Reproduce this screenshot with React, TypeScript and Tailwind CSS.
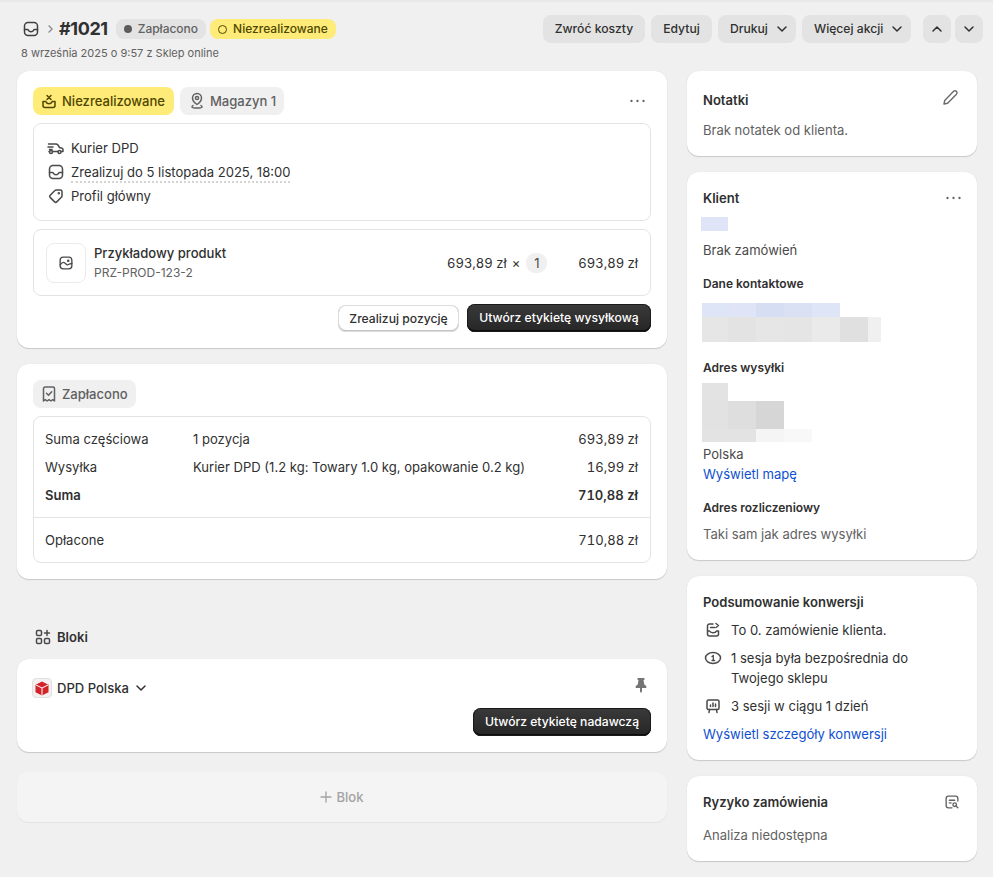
import type { ReactNode } from 'react'

const Ico = ({ children, size = 20, className = '' }: { children: ReactNode; size?: number; className?: string }) => (
  <svg
    width={size}
    height={size}
    viewBox="0 0 20 20"
    fill="none"
    stroke="currentColor"
    strokeWidth={1.5}
    strokeLinecap="round"
    strokeLinejoin="round"
    className={`shrink-0 ${className}`}
  >
    {children}
  </svg>
)

const OrderIcon = ({ size = 20, className = '' }: { size?: number; className?: string }) => (
  <Ico size={size} className={className}>
    <rect x="3.5" y="3.5" width="13" height="13" rx="3.5" />
    <path d="M3.5 10.5h2.8c.5 0 .9.3 1.1.7.4.9 1.4 1.5 2.6 1.5s2.2-.6 2.6-1.5c.2-.4.6-.7 1.1-.7h2.8" />
  </Ico>
)

const Chevron = ({ up = false, className = '' }: { up?: boolean; className?: string }) => (
  <Ico size={20} className={className}>
    <path d={up ? 'M6 12l4-4 4 4' : 'M6 8l4 4 4-4'} />
  </Ico>
)

const Dots = () => (
  <svg width="15" height="4" viewBox="0 0 15 4" fill="#616161" className="shrink-0">
    <circle cx="1.500" cy="2" r="1.150" />
    <circle cx="7.500" cy="2" r="1.150" />
    <circle cx="13.500" cy="2" r="1.150" />
  </svg>
)

const Card = ({ children, className = '' }: { children?: ReactNode; className?: string }) => (
  <section
    className={`rounded-xl bg-white shadow-[0_1px_1px_rgba(0,0,0,0.16),0_0_1px_rgba(0,0,0,0.1)] ${className}`}
  >
    {children}
  </section>
)

const Chip = ({ children, yellow = false, className = 'pl-1.5 pr-[9px]' }: { children: ReactNode; yellow?: boolean; className?: string }) => (
  <div
    className={`flex h-7 items-center gap-[3px] rounded-lg font-[550] ${
      yellow ? 'bg-[#ffeb78] text-[#4f4700]' : 'bg-[#f0f0f0] text-[#616161]'
    } ${className}`}
  >
    {children}
  </div>
)

const GrayBtn = ({ children, className = '' }: { children: ReactNode; className?: string }) => (
  <button
    className={`flex h-7 items-center justify-center rounded-lg bg-[#e3e3e3] text-[12.15px] font-[550] text-[#303030] ${className}`}
  >
    {children}
  </button>
)

const DarkBtn = ({ children, className = '' }: { children: ReactNode; className?: string }) => (
  <button
    className={`flex h-7 items-center justify-center rounded-lg bg-gradient-to-b from-[#3a3a3a] to-[#262626] text-[12.15px] font-[550] text-white shadow-[inset_0_0_0_1px_#1a1a1a,inset_0_2px_0_-1px_rgba(255,255,255,0.28),inset_0_-2px_0_#0d0d0d] ${className}`}
  >
    {children}
  </button>
)

const Patch = ({ w, h, c }: { w: number; h: number; c: string }) => (
  <div style={{ width: w, height: h, backgroundColor: c }} />
)

const Row = ({ children }: { children: ReactNode }) => <div className="flex">{children}</div>

const InfoRow = ({ icon, children }: { icon: ReactNode; children: ReactNode }) => (
  <div className="flex h-6 items-center gap-[5px] text-[#303030]">
    <span className="text-[#4a4a4a]">{icon}</span>
    {children}
  </div>
)

const TotalRow = ({ a, b, c, bold = false }: { a: string; b?: string; c: string; bold?: boolean }) => (
  <div className={`flex h-7 items-center text-[#303030] ${bold ? 'font-semibold' : ''}`}>
    <div className="w-[148px]">{a}</div>
    <div className="flex-1">{b}</div>
    <div className="tabular-nums">{c}</div>
  </div>
)

const Conv = ({ icon, children }: { icon: ReactNode; children: ReactNode }) => (
  <div className="flex gap-2 leading-5 text-[#303030]">
    <span className="text-[#4a4a4a]">{icon}</span>
    <div>{children}</div>
  </div>
)

export default function App() {
  return (
    <div
      className="h-[877px] overflow-hidden bg-[#f0f0f0] pl-[17px] text-[13.05px] leading-5 text-[#303030] shadow-[inset_0_3px_3px_-2px_rgba(0,0,0,0.06)]"
      style={{ fontFamily: 'Inter, "Noto Sans", sans-serif' }}
    >
      {/* header */}
      <header className="flex h-[71px] justify-between pr-[10px] pt-[15px]">
        <div className="pl-[4px]">
          <div className="flex h-7 items-center">
            <OrderIcon size={20} className="text-[#404040]" />
            <svg width="14" height="14" viewBox="0 0 20 20" fill="none" stroke="#8a8a8a" strokeWidth="1.800" className="ml-[2px]">
              <path d="M8 5l5 5-5 5" />
            </svg>
            <div className="ml-[2px] text-[18px] font-bold tracking-[-0.4px] text-[#303030]">#1021</div>
            <div className="ml-2 flex h-5 items-center gap-1.5 rounded-lg bg-[#e3e3e3] pl-2 pr-2 text-xs font-medium text-[#616161]">
              <span className="size-2 rounded-full bg-[#5c5c5c]" />
              Zapłacono
            </div>
            <div className="ml-1 flex h-5 items-center gap-1.5 rounded-lg bg-[#ffeb78] pl-2 pr-2 text-xs font-medium text-[#4f4700]">
              <span className="size-[9px] rounded-full border-[1.5px] border-[#4f4700]" />
              Niezrealizowane
            </div>
          </div>
          <div className="mt-[2px] text-[11px] leading-4 text-[#616161]">8 września 2025 o 9:57 z Sklep online</div>
        </div>
        <div className="flex h-7">
          <GrayBtn className="w-[102px]">Zwróć koszty</GrayBtn>
          <GrayBtn className="ml-1.5 w-[61px]">Edytuj</GrayBtn>
          <GrayBtn className="ml-1.5 w-[78px] !justify-start gap-1 pl-3">
            Drukuj <Chevron />
          </GrayBtn>
          <GrayBtn className="ml-1.5 w-[109px] !justify-start gap-1 pl-3">
            Więcej akcji <Chevron />
          </GrayBtn>
          <GrayBtn className="ml-3 w-7">
            <Chevron up />
          </GrayBtn>
          <GrayBtn className="ml-1 w-7">
            <Chevron />
          </GrayBtn>
        </div>
      </header>

      <div className="flex gap-5">
        {/* left column */}
        <main className="w-[650px]">
          <Card className="h-[277px] p-4">
            <div className="flex items-center justify-between pr-[6px]">
              <div className="flex gap-1.5">
                <Chip yellow>
                  <Ico size={20}>
                    <path d="M4 10.500v4a2 2 0 0 0 2 2h8a2 2 0 0 0 2-2v-4h-2.800c-.500 1.400-1.700 2.200-3.200 2.200s-2.700-.800-3.200-2.200z" />
                    <path d="M8 4.500l4 4M12 4.500l-4 4" />
                  </Ico>
                  Niezrealizowane
                </Chip>
                <Chip className="pl-[7px] pr-2">
                  <Ico size={20}>
                    <path d="M10 13.500s4.500-3 4.500-6.500a4.500 4.500 0 0 0-9 0c0 3.500 4.500 6.500 4.500 6.500z" />
                    <circle cx="10" cy="7" r="1.600" />
                    <path d="M6 14.500c-.600.400-1 .800-1 1.200 0 .800 2.200 1.300 5 1.300s5-.500 5-1.300c0-.400-.400-.800-1-1.200" />
                  </Ico>
                  Magazyn 1
                </Chip>
              </div>
              <Dots />
            </div>
            <div className="mt-2 h-[98px] rounded-lg border border-[#e3e3e3] px-3 pt-[12px]">
              <InfoRow
                icon={
                  <Ico size={20}>
                    <path d="M2.500 6h7.500c1 0 1.500.500 2 1l1.500 2.500 2.500.700c.600.200 1 .700 1 1.300v2h-1.500M6.500 13.500h5.500M3 13.500h.500M2 9h5M3.500 11.500h2.500" />
                    <circle cx="5" cy="14" r="1.500" />
                    <circle cx="13.500" cy="14" r="1.500" />
                  </Ico>
                }
              >
                Kurier DPD
              </InfoRow>
              <InfoRow icon={<OrderIcon />}>
                <span className="mt-[2px] border-b-2 border-dotted border-[#d4d4d4] leading-[17px]">
                  Zrealizuj do 5 listopada 2025, 18:00
                </span>
              </InfoRow>
              <InfoRow
                icon={
                  <Ico size={20}>
                    <path d="M10 4h4.500A1.500 1.500 0 0 1 16 5.500V10c0 .400-.150.800-.450 1.050l-4.800 4.800a1.500 1.500 0 0 1-2.100 0l-4.500-4.500a1.500 1.500 0 0 1 0-2.100L8.950 4.450C9.200 4.150 9.600 4 10 4z" />
                    <circle cx="12.800" cy="7.200" r=".5" />
                  </Ico>
                }
              >
                Profil główny
              </InfoRow>
            </div>
            <div className="mt-2 flex h-[67px] items-center rounded-lg border border-[#e3e3e3] px-3">
              <div className="flex size-10 items-center justify-center rounded-lg border border-[#ebebeb] text-[#4a4a4a]">
                <Ico size={18}>
                  <rect x="3.500" y="3.500" width="13" height="13" rx="3.500" />
                  <path d="M3.500 12c1.500-2 3-3 4.500-2.500s2.500 3 4 2.500 2.500-1.500 4.500-1.500" />
                  <circle cx="12.500" cy="7.500" r=".7" />
                </Ico>
              </div>
              <div className="ml-2 flex-1">
                <div className="-mt-px font-[550]">Przykładowy produkt</div>
                <div className="mt-px text-xs leading-[18px] text-[#616161]">PRZ-PROD-123-2</div>
              </div>
              <div className="tabular-nums">693,89 zł</div>
              <div className="ml-[5px]">×</div>
              <div className="ml-[6px] flex h-5 w-[21px] items-center justify-center rounded-[9px] bg-[#f0f0f0] text-[#4a4a4a]">1</div>
              <div className="ml-[31px] tabular-nums">693,89 zł</div>
            </div>
            <div className="mt-2 flex justify-end gap-2">
              <button className="mt-px h-[27px] w-[121px] rounded-lg bg-white text-[12.15px] font-[550] text-[#303030] shadow-[inset_0_0_0_1px_#dcdcdc,inset_0_-1px_0_1px_#c4c4c4]">
                Zrealizuj pozycję
              </button>
              <DarkBtn className="w-[184px]">Utwórz etykietę wysyłkową</DarkBtn>
            </div>
          </Card>

          <Card className="mt-4 h-[215px] p-4">
            <div className="flex">
              <Chip className="pl-1.5 pr-2">
                <Ico size={20}>
                  <path d="M4.500 4.500c0-.800.700-1.500 1.500-1.500h8c.800 0 1.500.700 1.500 1.500V17l-1.800-1.300-1.800 1.300-1.900-1.300-1.900 1.300-1.800-1.300L4.500 17z" />
                  <path d="M7.500 9.300l2 2 3.200-3.500" />
                </Ico>
                Zapłacono
              </Chip>
            </div>
            <div className="mt-2 h-[147px] rounded-lg border border-[#e3e3e3] pt-2">
              <div className="pl-[11px] pr-3">
                <TotalRow a="Suma częściowa" b="1 pozycja" c="693,89 zł" />
                <TotalRow a="Wysyłka" b="Kurier DPD (1.2 kg: Towary 1.0 kg, opakowanie 0.2 kg)" c="16,99 zł" />
                <TotalRow a="Suma" c="710,88 zł" bold />
              </div>
              <div className="mt-2 border-t border-[#e3e3e3] pl-[11px] pr-3 pt-[8px]">
                <TotalRow a="Opłacone" c="710,88 zł" />
              </div>
            </div>
          </Card>

          <div className="mt-[48px] flex h-5 items-center gap-1 pl-[16px] font-semibold text-[#303030]">
            <Ico size={20} className="text-[#4a4a4a]">
              <rect x="3.500" y="3.500" width="5" height="5" rx="1.300" />
              <rect x="3.500" y="11.500" width="5" height="5" rx="1.300" />
              <rect x="11.500" y="11.500" width="5" height="5" rx="1.300" />
              <path d="M14 3.500v5M11.500 6h5" />
            </Ico>
            Bloki
          </div>

          <Card className="mt-[12px] h-[93px] p-4">
            <div className="flex h-[26px] items-center justify-between pr-[3px]">
              <div className="-ml-px flex items-center font-[550]">
                <div className="flex size-5 items-center justify-center rounded border border-[#e0e0e0] bg-[#f5f0f0]">
                  <svg width="14" height="15" viewBox="0 0 14 15">
                    <path d="M7 .5l6.500 3.200v7.600L7 14.500.5 11.300V3.700z" fill="#d2232a" />
                    <path d="M1 4l6 3 6-3M7 7v7.500" fill="none" stroke="#fff" strokeWidth="1" />
                  </svg>
                </div>
                <span className="ml-[5px]">DPD Polska</span>
                <Chevron className="ml-[2px] text-[#303030]" />
              </div>
              <svg width="14" height="16" viewBox="0 0 14 16" fill="#757575" className="-mt-[6px]">
                <path d="M3.500 1h7v1.500l-1 .8.800 4.200 2 1.500v2H8v3.500L7 16l-1-1.500V11H1.700V9l2-1.500.800-4.200-1-.800z" />
              </svg>
            </div>
            <div className="mt-[7px] flex justify-end">
              <DarkBtn className="w-[178px]">Utwórz etykietę nadawczą</DarkBtn>
            </div>
          </Card>

          <div className="mt-5 flex h-[50px] items-center justify-center gap-1 rounded-xl bg-[#f4f4f4] font-medium text-[#a3a3a3] shadow-[0_1px_1px_rgba(0,0,0,0.06)]">
            <svg width="12" height="12" viewBox="0 0 12 12" stroke="currentColor" strokeWidth="1.300" strokeLinecap="round">
              <path d="M6 1v10M1 6h10" />
            </svg>
            Blok
          </div>
        </main>

        {/* right column */}
        <aside className="w-[290px]">
          <Card className="h-[85px] px-4 pt-[19px]">
            <div className="flex h-5 items-start justify-between">
              <h2 className="font-semibold">Notatki</h2>
              <svg width="24" height="24" viewBox="0 0 20 20" fill="none" stroke="#6a6a6a" strokeWidth="1.150" strokeLinejoin="round" className="-mr-[1px] -mt-[4px]">
                <path d="M5 15l.6-3 7.400-7.600a1.700 1.700 0 0 1 2.400 2.400L8 14.400z" />
              </svg>
            </div>
            <p className="mt-[10px] text-[#616161]">Brak notatek od klienta.</p>
          </Card>

          <Card className="mt-4 h-[388px] px-4 pt-4">
            <div className="flex h-5 items-center justify-between">
              <h2 className="font-semibold">Klient</h2>
              <Dots />
            </div>
            <div className="-ml-[2px] mt-[9px]">
              <Patch w={27} h={14} c="#dfe5f7" />
            </div>
            <p className="mt-[9px] text-[#4a4a4a]">Brak zamówień</p>
            <h3 className="mt-[14px] text-xs font-semibold leading-5">Dane kontaktowe</h3>
            <div className="-ml-px mt-[9px]">
              <Row>
                <Patch w={26} h={14} c="#dee5f6" />
                <Patch w={28} h={14} c="#dfe5f6" />
                <Patch w={28} h={14} c="#d6def4" />
                <Patch w={28} h={14} c="#dae1f5" />
                <Patch w={28} h={14} c="#dee5f6" />
              </Row>
              <Row>
                <Patch w={26} h={25} c="#e6e6e6" />
                <Patch w={28} h={25} c="#e3e3e3" />
                <Patch w={28} h={25} c="#e6e6e6" />
                <Patch w={28} h={25} c="#e5e5e5" />
                <Patch w={28} h={25} c="#eaeaea" />
                <Patch w={28} h={25} c="#e0e0e0" />
                <Patch w={13} h={25} c="#f0f0f0" />
              </Row>
            </div>
            <h3 className="mt-4 text-xs font-semibold leading-5">Adres wysyłki</h3>
            <div className="-ml-px mt-[5px]">
              <Row>
                <Patch w={26} h={18} c="#e3e3e3" />
              </Row>
              <Row>
                <Patch w={26} h={28} c="#e2e2e2" />
                <Patch w={28} h={28} c="#dedede" />
                <Patch w={28} h={28} c="#d6d6d6" />
              </Row>
              <Row>
                <Patch w={54} h={13} c="#e3e3e3" />
                <Patch w={28} h={13} c="#f5f5f5" />
                <Patch w={28} h={13} c="#f8f8f8" />
              </Row>
            </div>
            <p className="mt-[2px] text-[#4a4a4a]">Polska</p>
            <a className="text-[#0f50d0]">Wyświetl mapę</a>
            <h3 className="mt-[14px] text-xs font-semibold leading-5">Adres rozliczeniowy</h3>
            <p className="mt-[6px] text-[#616161]">Taki sam jak adres wysyłki</p>
          </Card>

          <Card className="mt-4 h-[184px] px-4 pt-4">
            <h2 className="font-semibold">Podsumowanie konwersji</h2>
            <div className="mt-2 space-y-2">
              <Conv
                icon={
                  <Ico size={20}>
                    <path d="M10 4H6.500A2 2 0 0 0 4.500 6v8a2 2 0 0 0 2 2h7a2 2 0 0 0 2-2v-3h-2c-.400 1-1.500 1.700-3.500 1.700S7 12 6.500 11H4.500" />
                    <path d="M7.500 7.500h4M13 3.500l2.500 2-2.500 2" />
                  </Ico>
                }
              >
                To 0. zamówienie klienta.
              </Conv>
              <Conv
                icon={
                  <Ico size={20}>
                    <ellipse cx="10" cy="10" rx="7.500" ry="5.500" />
                    <path d="M9 8.500l1.300-1v5M9 12.500h2.600" strokeWidth="1.300" />
                  </Ico>
                }
              >
                1 sesja była bezpośrednia do
                <br />
                Twojego sklepu
              </Conv>
              <Conv
                icon={
                  <Ico size={20}>
                    <rect x="4" y="4" width="12" height="9.500" rx="1.500" />
                    <path d="M7.500 10.500V9M10 10.500V7M12.500 10.500V8M6.500 13.500l-.500 3M13.500 13.500l.500 3" />
                  </Ico>
                }
              >
                3 sesji w ciągu 1 dzień
              </Conv>
            </div>
            <a className="mt-2 block text-[#0f50d0]">Wyświetl szczegóły konwersji</a>
          </Card>

          <Card className="mt-4 h-[85px] px-4 pt-4">
            <div className="flex h-5 items-center justify-between">
              <h2 className="font-semibold">Ryzyko zamówienia</h2>
              <Ico size={18} className="text-[#616161]">
                <path d="M10 16.500H6A2.500 2.500 0 0 1 3.500 14V6A2.500 2.500 0 0 1 6 3.500h8A2.500 2.500 0 0 1 16.500 6v3" />
                <path d="M7 8h6M7 11h2" />
                <circle cx="13" cy="13" r="2" />
                <path d="M14.500 14.500l2 2" />
              </Ico>
            </div>
            <p className="mt-[13px] text-[#616161]">Analiza niedostępna</p>
          </Card>

          <Card className="mt-4 h-[85px]" />
        </aside>
      </div>
    </div>
  )
}
